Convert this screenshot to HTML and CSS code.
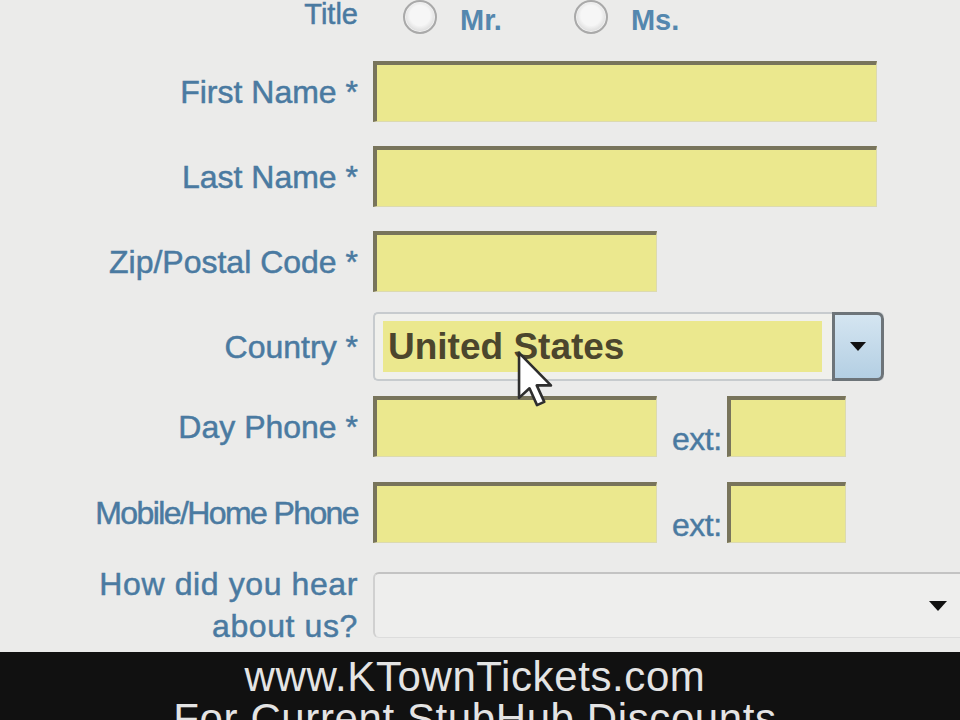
FILE: index.html
```html
<!DOCTYPE html>
<html lang="en">
<head>
<meta charset="utf-8">
<title>Registration</title>
<link rel="stylesheet" href="styles.css">
</head>
<body>
<div class="page">
  <form class="form">
    <div class="row row-title">
      <span class="label label-title">Title</span>
      <div class="options">
        <span class="radio"></span><span class="opt">Mr.</span>
        <span class="radio radio-next"></span><span class="opt">Ms.</span>
      </div>
    </div>

    <div class="row row-first">
      <label class="label">First Name *</label>
      <div class="field field-wide"></div>
    </div>

    <div class="row">
      <label class="label">Last Name *</label>
      <div class="field field-wide"></div>
    </div>

    <div class="row">
      <label class="label">Zip/Postal Code *</label>
      <div class="field field-short"></div>
    </div>

    <div class="row row-country">
      <label class="label">Country *</label>
      <div class="select-country">
        <div class="select-value">United States</div>
        <div class="select-btn"><span class="caret"></span></div>
        <svg class="cursor" width="38" height="58" viewBox="0 0 13 20" aria-hidden="true">
          <path d="M1 1 L1 16.5 L4.6 13.2 L7.2 19 L9.7 17.9 L7.1 12.2 L12 12.2 Z" fill="#ffffff" stroke="#2e2e2e" stroke-width="0.9" stroke-linejoin="round"/>
        </svg>
      </div>
    </div>

    <div class="row row-day">
      <label class="label">Day Phone *</label>
      <div class="phone">
        <div class="field field-short"></div>
        <span class="ext">ext:</span>
        <div class="field field-ext"></div>
      </div>
    </div>

    <div class="row row-mobile">
      <label class="label label-tight">Mobile/Home Phone</label>
      <div class="phone">
        <div class="field field-short"></div>
        <span class="ext">ext:</span>
        <div class="field field-ext"></div>
      </div>
    </div>

    <div class="row row-how">
      <label class="label label-multi">How did you hear<br>about us?</label>
      <div class="select-plain"><span class="caret caret-small"></span></div>
    </div>
  </form>

  <div class="banner">www.KTownTickets.com<br>For Current StubHub Discounts</div>
</div>
</body>
</html>
```

FILE: styles.css
```css
html, body {
  margin: 0;
  padding: 0;
}

body {
  background: #ebebea;
  font-family: "Liberation Sans", Arial, sans-serif;
  width: 960px;
  height: 720px;
  overflow: hidden;
}

.page {
  display: flex;
  flex-direction: column;
}

.form {
  display: flex;
  flex-direction: column;
}

.row {
  display: grid;
  grid-template-columns: 358px 1fr;
  grid-template-rows: minmax(0, 1fr);
  column-gap: 15px;
  align-items: center;
  height: 61px;
  margin-top: 24px;
}

.row-title {
  height: 34px;
  margin-top: 0;
}

.row-first {
  margin-top: 27px;
}

.row-country {
  height: 69px;
  margin-top: 20px;
}

.row-day {
  margin-top: 15px;
}

.row-mobile {
  margin-top: 25px;
}

.row-how {
  height: 66px;
  margin-top: 29px;
}

.label {
  text-align: right;
  font-size: 32px;
  line-height: 36px;
  color: #4a7aa1;
  white-space: nowrap;
  -webkit-text-stroke: 0.5px #4a7aa1;
}

.label-title {
  font-size: 29px;
  line-height: 29px;
  align-self: start;
}

.label-tight {
  letter-spacing: -1.6px;
}

.label-multi {
  line-height: 42px;
  letter-spacing: 0.6px;
}

.options {
  display: flex;
  align-items: center;
  padding-left: 30px;
}

.radio {
  width: 30px;
  height: 30px;
  border-radius: 50%;
  border: 2px solid #a9a9a9;
  background: radial-gradient(circle at 50% 45%, #f6f6f6 0 45%, #dedede 70%, #cfcfcf 100%);
  box-shadow: inset 0 0 0 1px #f0f0f0;
}

.radio-next {
  margin-left: 72px;
}

.opt {
  margin-left: 23px;
  padding-top: 6px;
  font-size: 29px;
  font-weight: bold;
  color: #5487ae;
}

.field {
  box-sizing: border-box;
  height: 61px;
  background: #ebe88e;
  border-top: 4px solid #78745b;
  border-left: 4px solid #78745b;
  border-right: 1px solid #dcdab0;
  border-bottom: 1px solid #dcdab0;
}

.field-wide {
  width: 504px;
}

.field-short {
  width: 284px;
}

.field-ext {
  width: 119px;
}

.phone {
  display: flex;
  align-items: flex-end;
  height: 61px;
}

.ext {
  margin-left: 15px;
  margin-right: 5px;
  font-size: 32px;
  line-height: 36px;
  color: #4a7aa1;
  letter-spacing: -0.5px;
  -webkit-text-stroke: 0.4px #4a7aa1;
}

.select-country {
  position: relative;
  display: flex;
  box-sizing: border-box;
  width: 511px;
  height: 69px;
  border: 2px solid #c7cbce;
  border-right: none;
  border-radius: 5px;
  background: #f0f0ec;
}

.select-value {
  flex: 0 0 439px;
  box-sizing: border-box;
  margin: 7px 10px 7px 8px;
  padding-left: 5px;
  display: flex;
  align-items: center;
  background: #ebe88e;
  font-size: 37px;
  font-weight: bold;
  color: #4b462d;
}

.select-btn {
  flex: 1;
  margin: -2px 0;
  display: flex;
  align-items: center;
  justify-content: center;
  border: 3px solid #6d7479;
  border-radius: 0 7px 7px 0;
  background: linear-gradient(#d4e5f1, #b4cfe3);
}

.caret {
  width: 0;
  height: 0;
  border-left: 8px solid transparent;
  border-right: 8px solid transparent;
  border-top: 9px solid #111111;
}

.caret-small {
  border-left-width: 9px;
  border-right-width: 9px;
  border-top-width: 10px;
}

.cursor {
  position: absolute;
  left: 141px;
  top: 36px;
}

.select-plain {
  box-sizing: border-box;
  width: 592px;
  height: 66px;
  display: flex;
  align-items: center;
  justify-content: flex-end;
  padding-right: 18px;
  border-top: 2px solid #c3c3c3;
  border-left: 2px solid #d0d0d0;
  border-bottom: 1px solid #dcdcdc;
  border-radius: 6px 0 0 6px;
  background: #eeeeed;
}

.banner {
  margin-top: 14px;
  height: 68px;
  box-sizing: border-box;
  padding: 4px 10px 0 0;
  overflow: hidden;
  background: #111111;
  color: #e4e4e4;
  font-size: 42px;
  line-height: 42px;
  letter-spacing: 0.6px;
  text-align: center;
}
```
